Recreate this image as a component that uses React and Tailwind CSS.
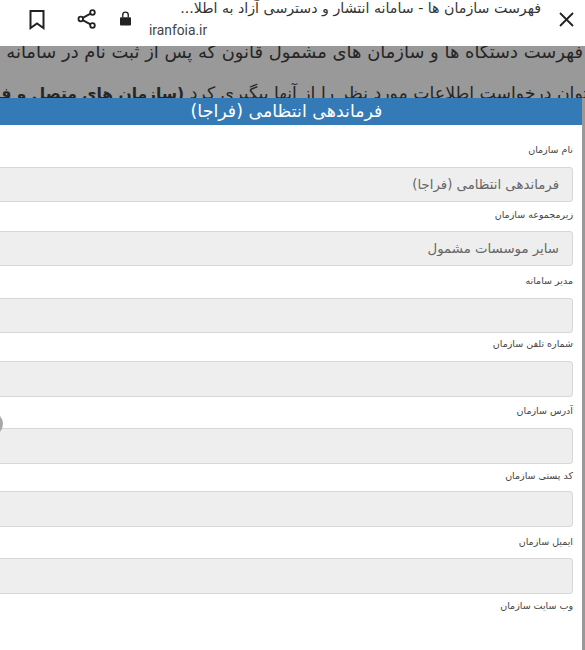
import React from "react";

const fields = [
  { label: "نام سازمان", value: "فرماندهی انتظامی (فراجا)", top: "mt-[17px]", gap: "mt-[9px]", h: "h-[35px]" },
  { label: "زیرمجموعه سازمان", value: "سایر موسسات مشمول", top: "mt-[5px]", gap: "mt-[8px]", h: "h-[35px]" },
  { label: "مدیر سامانه", value: "", top: "mt-[7px]", gap: "mt-[9px]", h: "h-[35px]" },
  { label: "شماره تلفن سازمان", value: "", top: "mt-[3px]", gap: "mt-[9px]", h: "h-[36px]" },
  { label: "آدرس سازمان", value: "", top: "mt-[6px]", gap: "mt-[9px]", h: "h-[36px]" },
  { label: "کد پستی سازمان", value: "", top: "mt-[4px]", gap: "mt-[7px]", h: "h-[36px]" },
  { label: "ایمیل سازمان", value: "", top: "mt-[7px]", gap: "mt-[8px]", h: "h-[36px]" },
];

export default function App() {
  return (
    <div className="relative w-[585px] h-[650px] overflow-hidden bg-white font-['DejaVu_Sans',sans-serif]">
      <header className="h-[46px] bg-white flex items-start relative">
        <div className="flex items-center pl-[29px] pt-[8px] gap-[32px]">
          <svg width="16" height="21" viewBox="0 0 16 20" fill="none" stroke="#222" strokeWidth="2"><path d="M1.5 1.5h13v17L8 14l-6.5 4.5z" /></svg>
          <svg width="20" height="22" viewBox="0 0 20 20" fill="none" stroke="#222" strokeWidth="1.8"><circle cx="15.5" cy="3.5" r="2.3" /><circle cx="3.8" cy="10" r="2.3" /><circle cx="15.5" cy="16.5" r="2.3" /><path d="M5.8 8.9l7.7-4.3M5.8 11.1l7.7 4.3" /></svg>
        </div>
        <svg className="ml-[23px] mt-[10px]" width="11" height="17" viewBox="0 0 12 17" fill="#222"><path d="M1 7h10a1 1 0 0 1 1 1v7a1 1 0 0 1-1 1H1a1 1 0 0 1-1-1V8a1 1 0 0 1 1-1z" /><path d="M3 7V4.5a3 3 0 0 1 6 0V7" fill="none" stroke="#222" strokeWidth="1.5" /></svg>
        <div className="ml-[18px] w-[392px] flex flex-col">
          <div dir="rtl" className="text-[14.2px] leading-[16px] h-[16px] text-[#333] whitespace-nowrap">فهرست سازمان ها - سامانه انتشار و دسترسی آزاد به اطلا...</div>
          <div className="mt-[6px] text-[13.8px] leading-[16px] text-[#444] font-['Roboto',sans-serif]">iranfoia.ir</div>
        </div>
        <svg className="ml-[18px] mt-[12px]" width="15" height="15" viewBox="0 0 15 15" fill="none" stroke="#222" strokeWidth="1.8"><path d="M1 1l13 13M14 1L1 14" /></svg>
      </header>

      <div dir="rtl" className="h-[52px] bg-[#999999] overflow-hidden text-[#262626] whitespace-nowrap">
        <div className="-mt-[8px] mr-[2px] leading-[28px] text-[17.9px]">فهرست دستگاه ها و سازمان های مشمول قانون که پس از ثبت نام در سامانه</div>
        <div className="mt-[13px] -mr-[18px] leading-[28px] text-[17.3px]">میتوان درخواست اطلاعات مورد نظر را از آنها پیگیری کرد <b className="text-[15.5px]">(سازمان های متصل و فراجا)</b></div>
      </div>

      <div className="flex h-[552px]">
        <main dir="rtl" className="w-[582px] shrink-0 bg-white overflow-hidden">
          <div className="h-[27px] bg-[#337ab7] text-white text-[17.4px] leading-[26px] text-center pr-[9px]">فرماندهی انتظامی (فراجا)</div>
          <form className="pr-[9px] -ml-[20px]">
            {fields.map((f, i) => (
              <div key={i} className={f.top}>
                <label className="block h-[16px] text-[9.5px] leading-[16px] text-[#444]">{f.label}</label>
                <input
                  readOnly
                  value={f.value}
                  className={`${f.gap} ${f.h} block w-full px-[13px] rounded-[3px] border border-[#d8d8d8] bg-[#eeeeee] text-[13.3px] text-[#666] outline-none`}
                />
              </div>
            ))}
            <label className="block mt-[4px] h-[16px] text-[9.5px] leading-[16px] text-[#444]">وب سایت سازمان</label>
          </form>
        </main>
        <div className="flex-1 bg-[#999999]" />
      </div>

      <div className="absolute -left-[21px] top-[412px] w-[24px] h-[24px] rounded-full bg-[#a8a8a8]" />
    </div>
  );
}
